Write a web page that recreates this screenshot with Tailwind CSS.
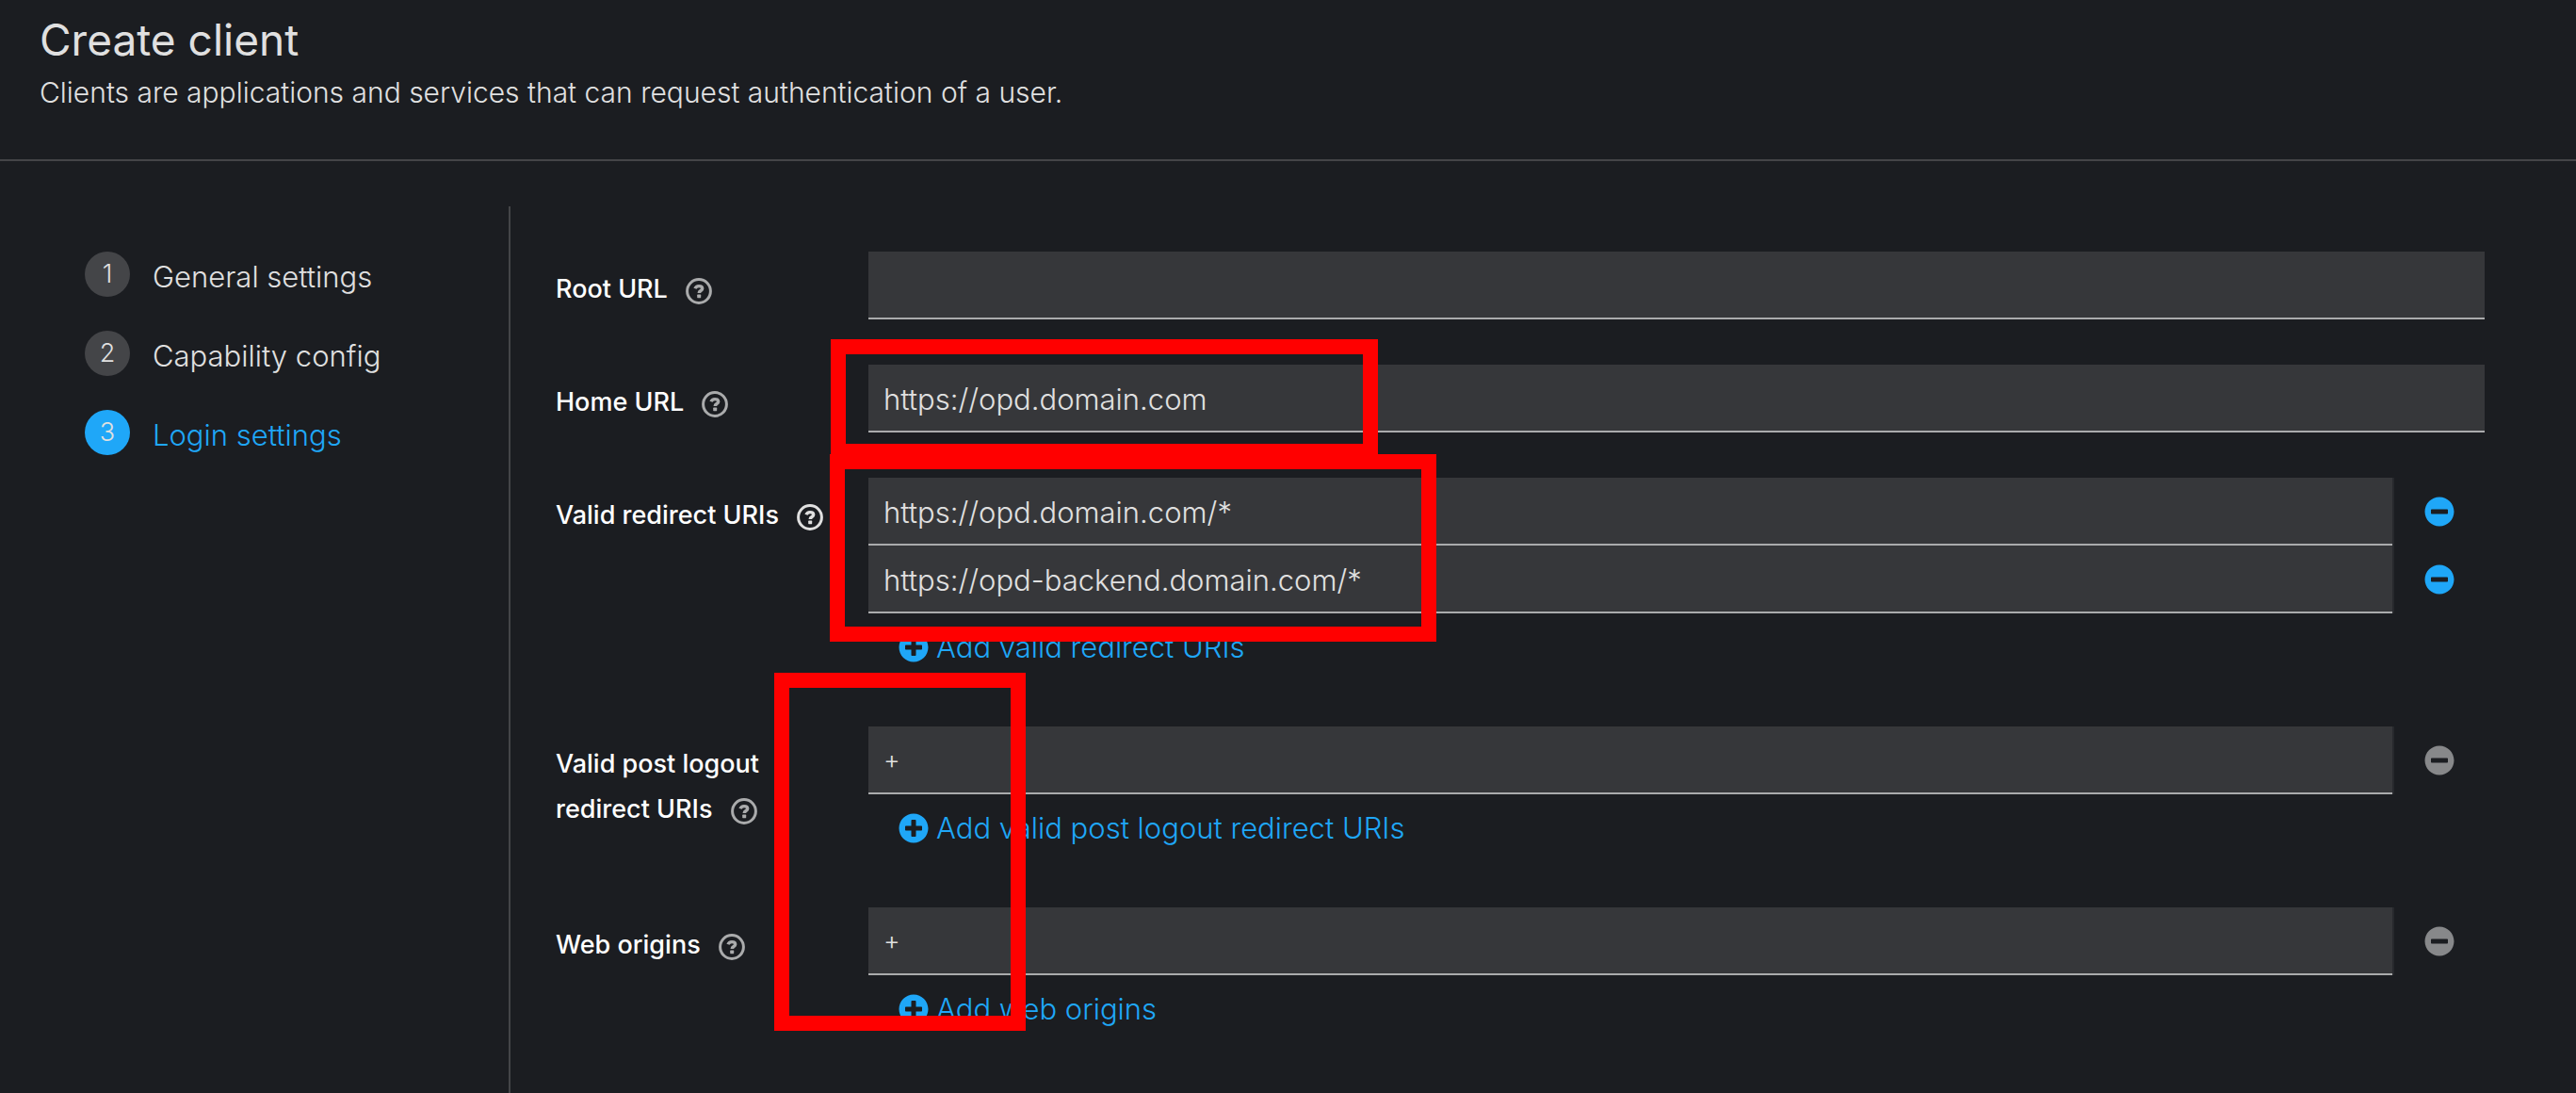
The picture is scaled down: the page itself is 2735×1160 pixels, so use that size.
<!DOCTYPE html>
<html lang="en">
<head>
<meta charset="utf-8">
<meta name="viewport" content="width=device-width, initial-scale=1">
<title>Create client</title>
<script src="https://cdn.jsdelivr.net/npm/@tailwindcss/browser@4"></script>
</head>
<body class="flex min-h-screen flex-col bg-[#1b1d21] font-['Inter',sans-serif] text-[31px] font-light text-[#e0e0e0]">

<svg class="hidden" aria-hidden="true">
  <symbol id="help" viewBox="0 0 28 28">
    <circle cx="14" cy="14" r="12.4" fill="none" stroke="currentColor" stroke-width="3"/>
    <path d="M10 11.300C10.700 9.300 12 8.600 14 8.600c2.300 0 3.700 1.100 3.700 2.700 0 2.200-3.500 2.200-3.500 4.700" fill="none" stroke="currentColor" stroke-width="3.400"/>
    <rect x="12.200" y="17.600" width="4" height="3.600" rx="0.600" fill="currentColor"/>
  </symbol>
  <symbol id="plus" viewBox="0 0 512 512">
    <path fill="currentColor" d="M256 8C119 8 8 119 8 256s111 248 248 248 248-111 248-248S393 8 256 8zm144 276c0 6.600-5.400 12-12 12h-92v92c0 6.600-5.400 12-12 12h-56c-6.600 0-12-5.400-12-12v-92h-92c-6.600 0-12-5.400-12-12v-56c0-6.600 5.400-12 12-12h92v-92c0-6.600 5.400-12 12-12h56c6.600 0 12 5.400 12 12v92h92c6.600 0 12 5.400 12 12v56z"/>
  </symbol>
  <symbol id="minus" viewBox="0 0 512 512">
    <path fill="currentColor" d="M256 8C119 8 8 119 8 256s111 248 248 248 248-111 248-248S393 8 256 8zM124 296c-6.600 0-12-5.400-12-12v-56c0-6.600 5.400-12 12-12h264c6.600 0 12 5.400 12 12v56c0 6.600-5.400 12-12 12H124z"/>
  </symbol>
</svg>

<header class="border-b-2 border-[#444548] px-[42px] pt-3 pb-[45px]">
  <h1 class="text-[46px] leading-[60px] font-normal">Create client</h1>
  <p class="text-[30px] leading-[52px]">Clients are applications and services that can request authentication of a user.</p>
</header>

<div class="flex flex-1 pt-12">
  <nav class="w-[540px] shrink-0 pt-12 pl-[90px]" aria-label="Wizard steps">
    <ol class="flex flex-col gap-9">
      <li>
        <button type="button" class="flex h-12 gap-6">
          <span class="size-12 rounded-full bg-[#444548] text-center text-[27px] leading-[48px]">1</span>
          <span class="leading-[54px]">General settings</span>
        </button>
      </li>
      <li>
        <button type="button" class="flex h-12 gap-6">
          <span class="size-12 rounded-full bg-[#444548] text-center text-[27px] leading-[48px]">2</span>
          <span class="leading-[54px]">Capability config</span>
        </button>
      </li>
      <li>
        <button type="button" class="flex h-12 gap-6" aria-current="step">
          <span class="size-12 rounded-full bg-[#1fa7f8] text-center text-[27px] leading-[48px]">3</span>
          <span class="leading-[54px] text-[#1fa7f8]">Login settings</span>
        </button>
      </li>
    </ol>
  </nav>

  <main class="min-w-0 flex-1 border-l-2 border-[#444548] pt-12 pr-[97px] pl-12">
    <form class="relative flex flex-col gap-12">

      <div class="grid grid-cols-[300px_1fr] gap-8">
        <div class="pt-4 text-[27px] leading-[48px] font-medium text-white">
          <label for="root-url">Root URL</label>
          <button type="button" class="ml-3 align-middle text-[#aaabac]" aria-label="Help for Root URL"><svg class="size-7"><use href="#help"/></svg></button>
        </div>
        <input id="root-url" type="text" value="" class="h-[72px] w-full border-b-2 border-[#aaabac] bg-[#36373a] px-4 pt-0.5 outline-none">
      </div>

      <div class="grid grid-cols-[300px_1fr] gap-8">
        <div class="pt-4 text-[27px] leading-[48px] font-medium text-white">
          <label for="home-url">Home URL</label>
          <button type="button" class="ml-3 align-middle text-[#aaabac]" aria-label="Help for Home URL"><svg class="size-7"><use href="#help"/></svg></button>
        </div>
        <input id="home-url" type="text" value="https://opd.domain.com" class="h-[72px] w-full border-b-2 border-[#aaabac] bg-[#36373a] px-4 pt-0.5 outline-none">
      </div>

      <div class="grid grid-cols-[300px_1fr] gap-8">
        <div class="pt-4 text-[27px] leading-[48px] font-medium text-white">
          <label for="redirect-0">Valid redirect URIs</label>
          <button type="button" class="ml-3 align-middle text-[#e0e0e0]" aria-label="Help for Valid redirect URIs"><svg class="size-7"><use href="#help"/></svg></button>
        </div>
        <div>
          <div class="flex">
            <div class="flex-1 border-r-2 border-[#27292d]"><input id="redirect-0" type="text" value="https://opd.domain.com/*" class="block h-[72px] w-full border-b-2 border-[#aaabac] bg-[#36373a] px-4 pt-0.5 outline-none"></div>
            <button type="button" class="px-8 text-[#1fa7f8]" aria-label="Remove"><svg class="size-8"><use href="#minus"/></svg></button>
          </div>
          <div class="flex">
            <div class="flex-1 border-r-2 border-[#27292d]"><input aria-label="Valid redirect URI 2" type="text" value="https://opd-backend.domain.com/*" class="block h-[72px] w-full border-b-2 border-[#aaabac] bg-[#36373a] px-4 pt-0.5 outline-none"></div>
            <button type="button" class="px-8 text-[#1fa7f8]" aria-label="Remove"><svg class="size-8"><use href="#minus"/></svg></button>
          </div>
          <button type="button" class="flex h-[72px] items-center gap-2 px-8 text-[#1fa7f8]"><svg class="size-8"><use href="#plus"/></svg>Add valid redirect URIs</button>
        </div>
      </div>

      <div class="grid grid-cols-[300px_1fr] gap-8">
        <div class="pt-4 text-[27px] leading-[48px] font-medium text-white">
          <label for="logout-0">Valid post logout redirect URIs</label>
          <button type="button" class="ml-3 align-middle text-[#aaabac]" aria-label="Help for Valid post logout redirect URIs"><svg class="size-7"><use href="#help"/></svg></button>
        </div>
        <div>
          <div class="flex">
            <div class="flex-1 border-r-2 border-[#27292d]"><input id="logout-0" type="text" value="+" class="block h-[72px] w-full border-b-2 border-[#aaabac] bg-[#36373a] px-4 text-[27px] outline-none"></div>
            <button type="button" disabled class="px-8 text-[#87888a]" aria-label="Remove"><svg class="size-8"><use href="#minus"/></svg></button>
          </div>
          <button type="button" class="flex h-[72px] items-center gap-2 px-8 text-[#1fa7f8]"><svg class="size-8"><use href="#plus"/></svg>Add valid post logout redirect URIs</button>
        </div>
      </div>

      <div class="grid grid-cols-[300px_1fr] gap-8">
        <div class="pt-4 text-[27px] leading-[48px] font-medium text-white">
          <label for="origins-0">Web origins</label>
          <button type="button" class="ml-3 align-middle text-[#aaabac]" aria-label="Help for Web origins"><svg class="size-7"><use href="#help"/></svg></button>
        </div>
        <div>
          <div class="flex">
            <div class="flex-1 border-r-2 border-[#27292d]"><input id="origins-0" type="text" value="+" class="block h-[72px] w-full border-b-2 border-[#aaabac] bg-[#36373a] px-4 text-[27px] outline-none"></div>
            <button type="button" disabled class="px-8 text-[#87888a]" aria-label="Remove"><svg class="size-8"><use href="#minus"/></svg></button>
          </div>
          <button type="button" class="flex h-[72px] items-center gap-2 px-8 text-[#1fa7f8]"><svg class="size-8"><use href="#plus"/></svg>Add web origins</button>
        </div>
      </div>

      <!-- Highlight frames drawn over the fields -->
      <div class="pointer-events-none absolute top-[93px] left-[292px] h-[127px] w-[581px] border-16 border-[#ff0000]"></div>
      <div class="pointer-events-none absolute top-[215px] left-[291px] h-[199px] w-[644px] border-16 border-[#ff0000]"></div>
      <div class="pointer-events-none absolute top-[447px] left-[232px] h-[380px] w-[267px] border-16 border-[#ff0000]"></div>
    </form>
  </main>
</div>
</body>
</html>
